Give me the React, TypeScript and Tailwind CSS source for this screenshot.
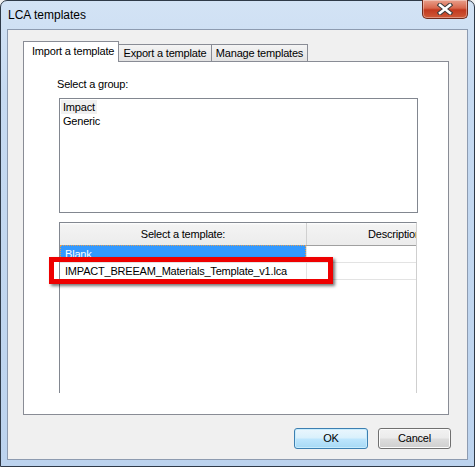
import React from "react";

export default function App() {
  return (
    <div className="relative w-[475px] h-[467px] overflow-hidden bg-[#f0f0f0]">
      <div className="flex flex-col w-[475px] h-[467px] border border-[#2f3a48] rounded-t-[7px] bg-[linear-gradient(180deg,#d3e3f5_0%,#c6daf1_20%,#bcd3ee_100%)] font-['Liberation_Sans',Arial,sans-serif] text-black">
        {/* Title bar */}
        <div className="relative flex h-[28px] items-start">
          <div className="pl-[7px] pt-[6px] text-[12px] leading-[16px] text-black">LCA templates</div>
          <div className="ml-auto mr-[6px] w-[46px] h-[19px] -mt-px rounded-b-[5px] border border-t-0 border-[#6e2a1c] bg-[linear-gradient(180deg,#e9a08c_0%,#d8674d_45%,#c2391f_55%,#cf5a38_100%)] flex items-center justify-center shadow-[inset_0_0_0_1px_rgba(255,255,255,0.35)]">
            <svg width="16" height="12" viewBox="0 0 16 12">
              <path d="M3 2 L13 10 M13 2 L3 10" stroke="#3b3b3b" strokeWidth="4.6" strokeLinecap="square" />
              <path d="M3 2 L13 10 M13 2 L3 10" stroke="#ffffff" strokeWidth="2.6" strokeLinecap="square" />
            </svg>
          </div>
        </div>

        {/* Client area */}
        <div className="mx-[6px] mb-[6px] flex-1 border border-[#8d9bb0] bg-[#f0f0f0] flex flex-col pl-[15px] pt-[11px] text-[11px] tracking-[-0.2px]">
          {/* Tabs */}
          <div className="flex items-end h-[20px]">
            <div className="relative z-10 w-[96px] h-[21px] -mb-px border border-b-0 border-[#898c95] bg-white flex items-start pl-[8px] pt-[3px] leading-[13px]">
              Import a template
            </div>
            <div className="w-[93px] h-[17px] border border-l-0 border-b-0 border-[#898c95] bg-[linear-gradient(180deg,#f4f4f4,#e2e2e2)] flex items-start justify-center pt-[2px] leading-[13px]">
              Export a template
            </div>
            <div className="w-[96px] h-[17px] border border-l-0 border-b-0 border-[#898c95] bg-[linear-gradient(180deg,#f4f4f4,#e2e2e2)] flex items-start justify-center pt-[2px] leading-[13px]">
              Manage templates
            </div>
          </div>

          {/* Panel */}
          <div className="w-[426px] h-[354px] border border-[#898c95] bg-white flex flex-col pl-[35px]">
            <div className="mt-[16px] h-[13px] leading-[13px] -ml-[2px]">Select a group:</div>
            <div className="mt-[7px] w-[359px] h-[115px] border border-[#828790] bg-white pt-px pl-px">
              <div className="w-fit h-[14px] leading-[14px] px-[2px] bg-[#f0f0f0]">Impact</div>
              <div className="h-[14px] leading-[14px] px-[2px]">Generic</div>
            </div>

            {/* Template grid */}
            <div className="mt-[9px] w-[358px] h-[171px] border-l border-t border-r border-l-[#828790] border-t-[#828790] border-r-[#cfcfcf] bg-white overflow-hidden flex flex-col">
              <div className="flex h-[23px] border-b border-[#a0a0a0] bg-[linear-gradient(180deg,#ffffff_0%,#f3f3f3_10%,#ececec_100%)] shrink-0">
                <div className="w-[247px] shrink-0 border-r border-[#d0d0d0] flex items-center justify-center leading-[13px]">
                  Select a template:
                </div>
                <div className="w-[175px] shrink-0 flex items-center justify-center leading-[13px]">Description</div>
              </div>
              <div className="flex h-[17px] border-b border-[#e3e3e3] shrink-0">
                <div className="w-[247px] shrink-0 border-r border-[#e3e3e3]">
                  <div className="h-[16px] w-[246px] bg-[#3399ff] border border-dotted border-[#e8a050] text-white pl-[4px] leading-[16px] -mt-px">
                    Blank
                  </div>
                </div>
                <div className="w-[175px] shrink-0"></div>
              </div>
              <div className="flex h-[17px] border-b border-[#e3e3e3] shrink-0">
                <div className="w-[247px] shrink-0 border-r border-[#e3e3e3] pl-[5px] leading-[16px] whitespace-nowrap">
                  IMPACT_BREEAM_Materials_Template_v1.lca
                </div>
                <div className="w-[175px] shrink-0"></div>
              </div>
              <div className="flex flex-1">
                <div className="w-[247px] shrink-0"></div>
                <div className="flex-1"></div>
              </div>
            </div>
          </div>

          {/* Buttons */}
          <div className="mt-[13px] flex justify-end pr-[16px] gap-[10px]">
            <button className="w-[74px] h-[21px] rounded-[3px] border border-[#3c7fb1] bg-[linear-gradient(180deg,#eaf6fd_0%,#d9f0fc_48%,#bee6fd_52%,#a7d9f5_100%)] shadow-[inset_0_0_0_1px_#c8ecfd] text-[11px] leading-[13px] flex items-center justify-center">
              OK
            </button>
            <button className="w-[73px] h-[21px] rounded-[3px] border border-[#707070] bg-[linear-gradient(180deg,#f2f2f2_0%,#ebebeb_48%,#dddddd_52%,#cfcfcf_100%)] shadow-[inset_0_0_0_1px_#fcfcfc] text-[11px] leading-[13px] flex items-center justify-center">
              Cancel
            </button>
          </div>
        </div>
      </div>

      {/* Red highlight annotation */}
      <div className="absolute left-[49px] top-[257px] w-[284px] h-[27px] border-[5px] border-[#ee0000] shadow-[2px_2px_3px_rgba(0,0,0,0.55)]"></div>
    </div>
  );
}
